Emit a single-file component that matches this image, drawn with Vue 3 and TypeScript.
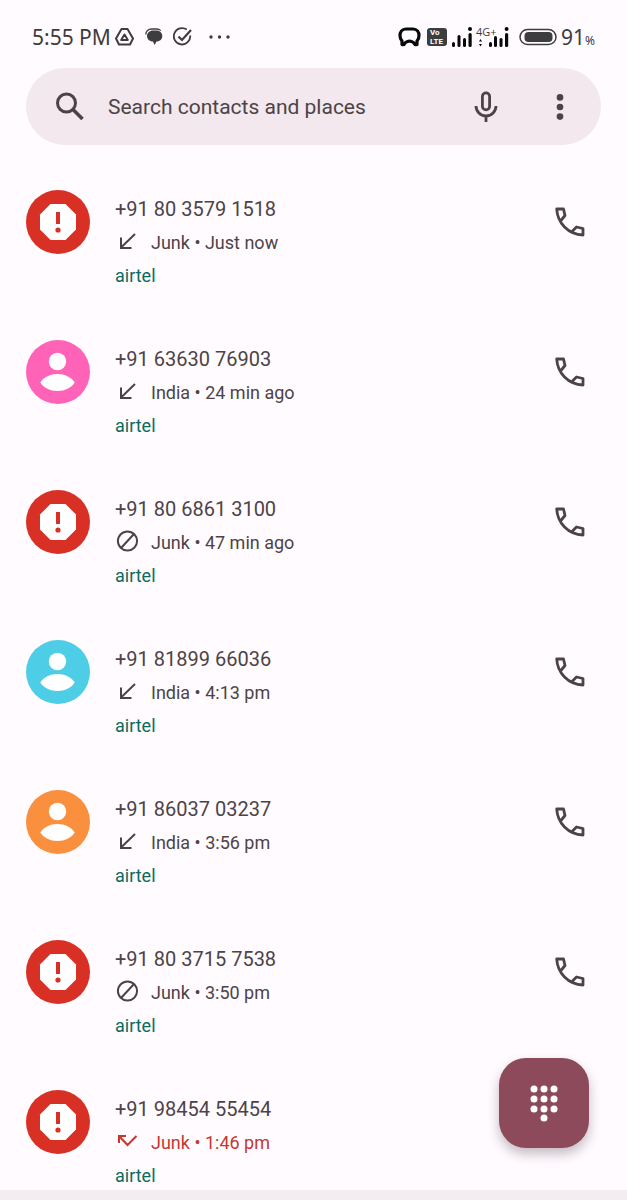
<script setup lang="ts">
import { ref } from 'vue'

type Kind = 'incoming' | 'blocked' | 'missed'

interface Call {
  number: string
  place: string
  time: string
  kind: Kind
  tone: 'spam' | 'pink' | 'cyan' | 'orange'
}

const query = ref('')

const calls: Call[] = [
  { number: '+91 80 3579 1518', place: 'Junk', time: 'Just now', kind: 'incoming', tone: 'spam' },
  { number: '+91 63630 76903', place: 'India', time: '24 min ago', kind: 'incoming', tone: 'pink' },
  { number: '+91 80 6861 3100', place: 'Junk', time: '47 min ago', kind: 'blocked', tone: 'spam' },
  { number: '+91 81899 66036', place: 'India', time: '4:13 pm', kind: 'incoming', tone: 'cyan' },
  { number: '+91 86037 03237', place: 'India', time: '3:56 pm', kind: 'incoming', tone: 'orange' },
  { number: '+91 80 3715 7538', place: 'Junk', time: '3:50 pm', kind: 'blocked', tone: 'spam' },
  { number: '+91 98454 55454', place: 'Junk', time: '1:46 pm', kind: 'missed', tone: 'spam' },
]

const keys: [number, number][] = [
  [5, 5], [15, 5], [25, 5],
  [5, 15], [15, 15], [25, 15],
  [5, 25], [15, 25], [25, 25],
  [15, 34],
]
</script>

<template>
  <div class="phone">
    <header class="status">
      <div class="status-side">
        <span class="clock">5:55 PM</span>
        <svg width="20" height="20" viewBox="0 0 20 20" fill="none" stroke="#3d3c3f" stroke-width="2" stroke-linejoin="round" aria-hidden="true">
          <path d="M6.500 2H12.500L18 11.500L15 17.500H4L1 11.500Z" />
          <path d="M9.500 7.500L12.800 13H6.200Z" />
        </svg>
        <svg width="18" height="20" viewBox="0 0 18 20" aria-hidden="true">
          <path d="M0.800 7.500C0.800 4 3.500 2 6.500 2H11.500C13.500 2 14.800 2.600 15.800 3.600" fill="none" stroke="#3d3c3f" stroke-width="1.300" />
          <path d="M8 3.500H11.500C15 3.500 17.300 6 17.300 9C17.300 12 15 14.500 11.500 14.500L9.500 18L8 14.500C4.500 14.500 2 12 2 9C2 6 4.500 3.500 8 3.500Z" fill="#3d3c3f" />
        </svg>
        <svg width="20" height="20" viewBox="0 0 20 20" fill="none" stroke="#3d3c3f" stroke-width="1.800" aria-hidden="true">
          <path d="M13.800 2.600A8.200 8.200 0 1 0 17.200 8.500" />
          <path d="M5.500 9.500L9 13L18 3" stroke-width="2.200" />
        </svg>
        <svg class="more" width="22" height="20" viewBox="0 0 22 20" fill="#3d3c3f" aria-hidden="true">
          <circle cx="2" cy="10" r="1.700" /><circle cx="10.500" cy="10" r="1.700" /><circle cx="19" cy="10" r="1.700" />
        </svg>
      </div>
      <div class="status-side right">
        <svg class="headset" width="23" height="20" viewBox="0 0 23 20" fill="none" stroke="#080808" stroke-width="3.200" stroke-linejoin="round" aria-hidden="true">
          <path d="M8 2H15C19 2 21 5 21 8.500C21 11.500 20 13 19 14V17.500C17.500 18 16.500 17.500 15.500 15.500C13 13.800 10 13.800 7.500 15.500C6.500 17.500 5.500 18 4 17.500V14C3 13 2 11.500 2 8.500C2 5 4 2 8 2Z" />
        </svg>
        <span class="volte"><b>Vo</b><b>LTE</b></span>
        <svg width="21" height="20" viewBox="0 0 21 20" fill="#080808" aria-hidden="true">
          <rect x="1" y="15" width="3" height="5" rx="1.500" /><rect x="6.500" y="8" width="3" height="12" rx="1.500" /><rect x="12" y="11" width="3" height="9" rx="1.500" /><rect x="17.500" y="6" width="3.200" height="14" rx="1.500" /><circle cx="19" cy="2" r="2" />
        </svg>
        <svg width="33" height="26" viewBox="0 0 33 26" fill="#080808" aria-hidden="true">
          <text x="0" y="12" font-family="'Open Sans', sans-serif" font-size="11" fill="#3d3c3f">4G+</text>
          <path d="M3 17.500L4.500 15L6 17.500ZM3 20L4.500 22.500L6 20Z" />
          <rect x="13" y="18" width="3" height="5" rx="1.500" /><rect x="18" y="12" width="3" height="11" rx="1.500" /><rect x="23.500" y="14" width="3" height="9" rx="1.500" /><rect x="29" y="9" width="3.200" height="14" rx="1.500" /><circle cx="30.600" cy="5" r="2" />
        </svg>
        <svg class="battery" width="38" height="18" viewBox="0 0 38 18" aria-hidden="true">
          <rect x="1" y="1.500" width="36" height="15" rx="7.500" fill="none" stroke="#3d3c3f" stroke-width="1.500" />
          <rect x="5.500" y="4" width="28" height="10" rx="4" fill="#3d3c3f" />
        </svg>
        <span class="level">91<small>%</small></span>
      </div>
    </header>

    <form class="search" role="search" @submit.prevent>
      <svg width="30" height="30" viewBox="0 0 30 30" fill="none" stroke="#4d4347" aria-hidden="true">
        <circle cx="11.500" cy="11" r="9" stroke-width="3" />
        <path d="M18 17.500L27.500 27" stroke-width="3.600" />
      </svg>
      <input v-model="query" type="text" placeholder="Search contacts and places" aria-label="Search contacts and places" />
      <button type="button" aria-label="Voice search">
        <svg width="24" height="32" viewBox="0 0 24 32" fill="none" stroke="#4d4347" stroke-width="2.800" aria-hidden="true">
          <rect x="8.400" y="1.900" width="7.200" height="17" rx="3.600" />
          <path d="M2 15A10 10 0 0 0 22 15M12 25V31" />
        </svg>
      </button>
      <button type="button" aria-label="More options">
        <svg width="8" height="28" viewBox="0 0 8 28" fill="#4d4347" aria-hidden="true">
          <circle cx="4" cy="4.400" r="3.300" /><circle cx="4" cy="14" r="3.300" /><circle cx="4" cy="23.600" r="3.300" />
        </svg>
      </button>
    </form>

    <main class="list">
      <article v-for="call in calls" :key="call.number" class="call">
        <div class="avatar" :class="call.tone">
          <svg v-if="call.tone === 'spam'" width="64" height="64" viewBox="0 0 64 64" fill="#fff" aria-hidden="true">
            <path d="M24.500 14H39.500L50 24.500V39.500L39.500 50H24.500L14 39.500V24.500Z" />
            <path d="M30 22H34V34H30Z" fill="#d93025" />
            <circle cx="32" cy="40" r="2.600" fill="#d93025" />
          </svg>
          <svg v-else width="64" height="64" viewBox="0 0 64 64" fill="#fff" aria-hidden="true">
            <circle cx="31.500" cy="21.500" r="8.700" />
            <path d="M14.300 42.500C18 37 24 34 31.500 34C39 34 45 37 48.700 42.500C45 48 39 51 31.500 51C24 51 18 48 14.300 42.500Z" />
          </svg>
        </div>
        <div class="info">
          <h2>{{ call.number }}</h2>
          <p class="detail" :class="{ missed: call.kind === 'missed' }">
            <svg width="24" height="24" viewBox="0 0 24 24" fill="none" stroke="currentColor" stroke-width="2" aria-hidden="true">
              <path v-if="call.kind === 'incoming'" d="M20 5L6 18.500M6 8.500V19H16.500" />
              <template v-else-if="call.kind === 'blocked'">
                <circle cx="12.500" cy="12" r="9.600" /><path d="M19 5L6 19" />
              </template>
              <path v-else d="M4 14V7H11M4 7L12.500 16L21.500 7" />
            </svg>
            <span>{{ call.place }} • {{ call.time }}</span>
          </p>
          <p class="carrier">airtel</p>
        </div>
        <button type="button" class="dial" :aria-label="`Call ${call.number}`">
          <svg width="30" height="30" viewBox="0 0 30 30" fill="none" stroke="#4d4347" stroke-width="2.800" stroke-linejoin="round" aria-hidden="true">
            <path d="M5.500 14L10 8.500L8.500 2H1.700C2.500 16 13 27.500 28 28V21.500L21.500 20L16.500 25" />
          </svg>
        </button>
      </article>
    </main>

    <button type="button" class="fab" aria-label="Open dialpad">
      <svg width="30" height="39" viewBox="0 0 30 39" fill="#fff" aria-hidden="true">
        <circle v-for="([x, y], i) in keys" :key="i" :cx="x" :cy="y" r="3.500" />
      </svg>
    </button>
    <footer class="bottom"></footer>
  </div>
</template>

<style>
body {
  margin: 0;
  background: #fffbff;
}
</style>

<style scoped>
.phone {
  position: relative;
  display: flex;
  flex-direction: column;
  height: 100vh;
  overflow: hidden;
  background: #fffbff;
  color: #4d4347;
  font-family: Roboto, "Liberation Sans", sans-serif;
}

button {
  display: flex;
  align-items: center;
  justify-content: center;
  padding: 0;
  border: 0;
  background: none;
  cursor: pointer;
}

svg {
  display: block;
  flex: none;
}

.status {
  display: flex;
  flex: none;
  justify-content: space-between;
  align-items: center;
  height: 68px;
  padding: 6px 32px 0;
  box-sizing: border-box;
  color: #3d3c3f;
  font-family: "Noto Sans", "Open Sans", sans-serif;
}

.status-side {
  display: flex;
  align-items: center;
  gap: 10px;
}

.status-side.right {
  gap: 4px;
}

.clock,
.level {
  font-size: 21px;
  line-height: 28px;
  white-space: nowrap;
}

.clock {
  margin-right: -6px;
}

.more {
  margin-left: 6px;
}

.level small {
  font-size: 12px;
  line-height: 12px;
}

.headset {
  margin-right: 2px;
}

.volte {
  display: flex;
  flex-direction: column;
  justify-content: center;
  width: 20px;
  height: 18px;
  padding-left: 3px;
  box-sizing: border-box;
  border-radius: 3px;
  background: #3d3c3f;
  color: #fff;
  font-family: Roboto, "Liberation Sans", sans-serif;
}

.volte b {
  font-size: 8px;
  line-height: 9px;
}

.battery {
  margin-left: 6px;
}

.search {
  display: flex;
  flex: none;
  align-items: center;
  height: 77px;
  margin: 0 26px;
  padding: 0 17px 0 29px;
  box-sizing: border-box;
  border-radius: 39px;
  background: #f2e8ed;
}

.search input {
  flex: 1;
  min-width: 0;
  height: 48px;
  margin-left: 23px;
  padding: 0;
  border: 0;
  outline: 0;
  background: none;
  color: #4d4347;
  font: inherit;
  font-size: 21px;
}

.search input::placeholder {
  color: #4d4347;
  opacity: 1;
}

.search button {
  width: 48px;
  height: 48px;
}

.search button + button {
  margin-left: 26px;
}

.list {
  flex: 1;
  min-height: 0;
  padding-top: 23px;
  overflow: hidden;
}

.call {
  display: flex;
  align-items: flex-start;
  height: 150px;
  padding: 22px 33px 0 26px;
  box-sizing: border-box;
}

.avatar {
  flex: none;
  width: 64px;
  height: 64px;
  border-radius: 50%;
}

.spam {
  background: #d93025;
}

.pink {
  background: #ff63b8;
}

.cyan {
  background: #4ecde6;
}

.orange {
  background: #fa903e;
}

.info {
  flex: 1;
  min-width: 0;
  padding: 2px 0 0 25px;
}

h2,
p {
  margin: 0;
  font-weight: 400;
}

h2 {
  font-size: 20px;
  line-height: 34px;
}

.detail {
  display: flex;
  align-items: flex-start;
  gap: 12px;
  font-size: 18px;
  line-height: 34px;
}

.detail svg {
  margin-top: 3px;
}

.missed {
  color: #c5372f;
}

.carrier {
  color: #0b6b60;
  font-size: 18px;
  line-height: 32px;
}

.dial {
  width: 48px;
  height: 64px;
}

.fab {
  position: absolute;
  right: 38px;
  bottom: 52px;
  width: 90px;
  height: 90px;
  border-radius: 27px;
  background: #8c4a5b;
  box-shadow: 0 6px 12px rgba(60, 40, 50, 0.3);
}

.bottom {
  flex: none;
  height: 10px;
  background: #f3edf1;
}
</style>
